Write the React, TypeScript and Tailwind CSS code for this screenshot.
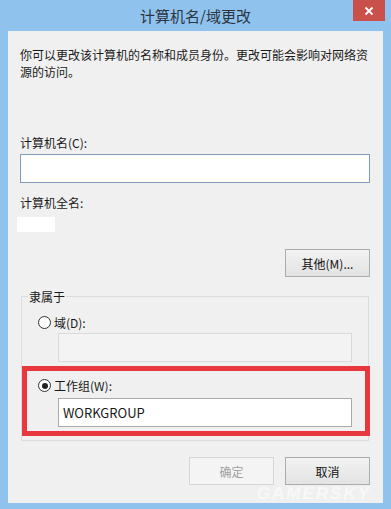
import React from 'react';

const font = { fontFamily: '"Noto Sans CJK SC", "Noto Sans", sans-serif' };

const Radio = ({ checked }: { checked?: boolean }) => (
  <span className="w-[13px] h-[13px] rounded-full border border-[#333] bg-white flex items-center justify-center shrink-0">
    {checked && <span className="w-[6px] h-[6px] rounded-full bg-[#222]" />}
  </span>
);

const Button = ({ label, disabled }: { label: string; disabled?: boolean }) => (
  <button
    className={
      disabled
        ? 'w-[85px] h-[28px] border border-[#d6d6d6] bg-[#f4f4f4] text-[#a0a0a0] text-[12px]'
        : 'w-[85px] h-[28px] border border-[#acacac] bg-gradient-to-b from-[#f2f2f2] to-[#e3e3e3] text-[#111] text-[12px]'
    }
  >
    {label}
  </button>
);

export default function App() {
  return (
    <div className="w-[391px] h-[509px] bg-[#8fc3ee] flex flex-col text-[#1a1a1a] overflow-hidden" style={font}>
      <div className="relative h-[31px] shrink-0 flex items-center justify-center">
        <span className="text-[15px] text-[#2a3540] pt-[1px]">计算机名/域更改</span>
        <div className="absolute right-[6px] top-0 w-[32px] h-[21px] bg-[#c9504b] flex items-center justify-center">
          <svg width="10" height="10" viewBox="0 0 10 10">
            <path d="M1.5 1.5 L8.5 8.5 M8.5 1.5 L1.5 8.5" stroke="#fff" strokeWidth="1.8" />
          </svg>
        </div>
      </div>

      <div className="relative flex-1 mx-[8px] mb-[6px] bg-[#f0f0f0] pl-[12px] pr-[13px] text-[12px] leading-[17px] flex flex-col">
        <p className="mt-[15px]">你可以更改该计算机的名称和成员身份。更改可能会影响对网络资源的访问。</p>

        <div className="mt-[54px]">计算机名(C):</div>
        <div className="mt-[3px] h-[29px] bg-white border border-[#7f9db9]" />

        <div className="mt-[11px]">计算机全名:</div>
        <div className="mt-[6px] -ml-[3px] w-[38px] h-[15px] bg-white" />

        <div className="mt-[17px] flex justify-end">
          <Button label="其他(M)..." />
        </div>

        <div className="relative mt-[19px] ml-[1px] mr-[1px] border border-[#dcdcdc] pb-[4px]">
          <span className="absolute -top-[9px] left-[6px] bg-[#f0f0f0] px-[1px]">隶属于</span>
          <div className="pt-[17px] pl-[16px] flex items-center gap-[3px]">
            <Radio />
            <span>域(D):</span>
          </div>
          <div className="mt-[2px] ml-[36px] w-[294px] h-[29px] border border-[#dadada] bg-[#f3f3f3]" />

          <div className="mt-[4px] -mr-[2px] border-[5px] border-[#e8383d] pb-[4px]">
            <div className="pt-[6px] pl-[11px] flex items-center gap-[3px]">
              <Radio checked />
              <span>工作组(W):</span>
            </div>
            <div className="mt-[4px] ml-[31px] w-[294px] h-[29px] border border-[#a9a9a9] bg-white flex items-center px-[4px] text-[13px]">
              WORKGROUP
            </div>
          </div>
        </div>

        <div className="mt-[16px] flex justify-end gap-[11px]">
          <Button label="确定" disabled />
          <Button label="取消" />
        </div>

        <div className="absolute right-[12px] bottom-[1px] text-[17px] leading-none font-black italic tracking-[2px] text-white/60 pointer-events-none" style={{ fontFamily: '"Liberation Sans", sans-serif' }}>
          GAMERSKY
        </div>
      </div>
    </div>
  );
}
